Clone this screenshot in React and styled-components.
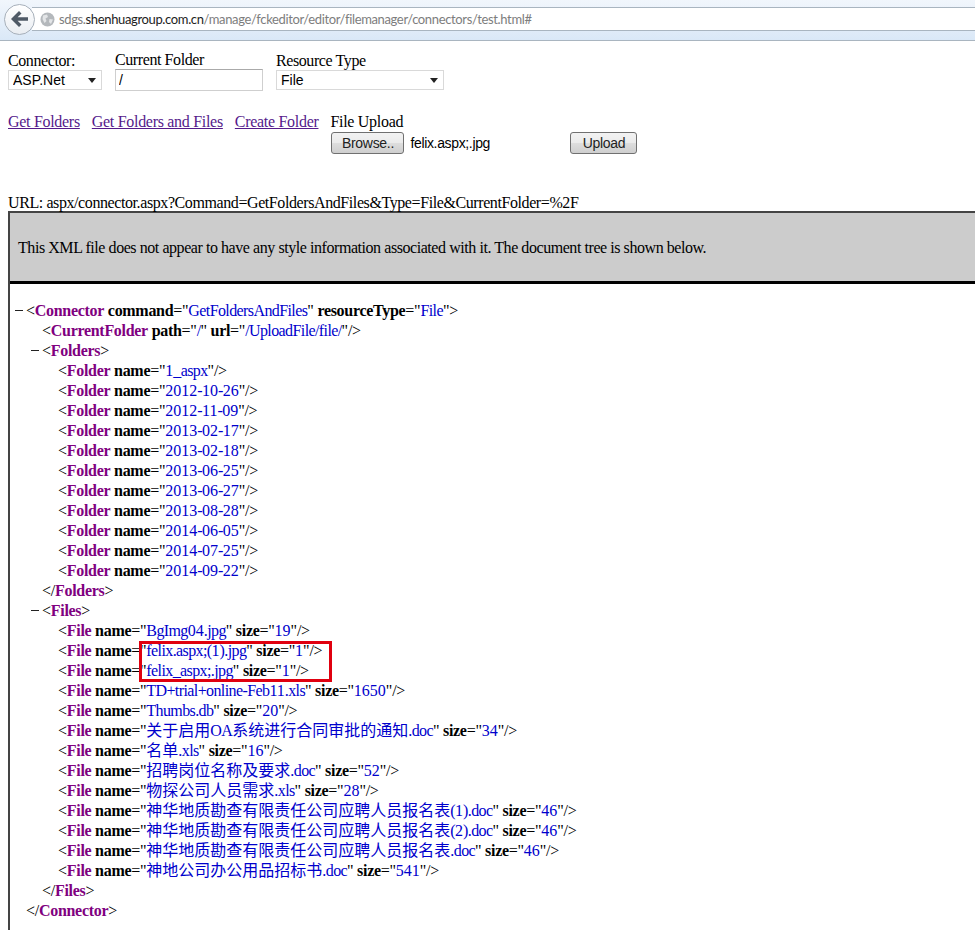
import styled, { createGlobalStyle } from "styled-components";

const GlobalStyle = createGlobalStyle`
  html, body {
    margin: 0;
    height: 930px;
    overflow: hidden;
    background: #fff;
  }
  body {
    font-family: "Liberation Serif", "Noto Sans CJK SC", serif;
    font-size: 16px;
    letter-spacing: -0.41px;
    color: #000;
  }
`;

const folders = [
  "1_aspx", "2012-10-26", "2012-11-09", "2013-02-17", "2013-02-18", "2013-06-25",
  "2013-06-27", "2013-08-28", "2014-06-05", "2014-07-25", "2014-09-22",
];

const files = [
  ["BgImg04.jpg", "19"],
  ["felix.aspx;(1).jpg", "1"],
  ["felix_aspx;.jpg", "1"],
  ["TD+trial+online-Feb11.xls", "1650"],
  ["Thumbs.db", "20"],
  ["关于启用OA系统进行合同审批的通知.doc", "34"],
  ["名单.xls", "16"],
  ["招聘岗位名称及要求.doc", "52"],
  ["物探公司人员需求.xls", "28"],
  ["神华地质勘查有限责任公司应聘人员报名表(1).doc", "46"],
  ["神华地质勘查有限责任公司应聘人员报名表(2).doc", "46"],
  ["神华地质勘查有限责任公司应聘人员报名表.doc", "46"],
  ["神地公司办公用品招标书.doc", "541"],
];

// chinese and digit runs keep their full width, only latin text is tightened
const splitRuns = (text) =>
  text.split(/([\u4e00-\u9fa5]+|\d+)/).map((part, i) => (i % 2 ? <FullWidth key={i}>{part}</FullWidth> : part));

const Attr = ({ name, value }) => (
  <>
    {" "}
    <AttrName>{name}</AttrName>="<AttrValue>{splitRuns(value)}</AttrValue>"
  </>
);

const App = () => {
  return (
    <>
      <GlobalStyle />
      <Toolbar>
        <BackButton>
          <svg width="20" height="18" viewBox="0 0 20 18">
            <path d="M9 1 L1 9 L9 17 L11.5 14.5 L7.6 10.8 H18 V7.2 H7.6 L11.5 3.5 Z" fill="#4f5a66" />
          </svg>
        </BackButton>
        <AddressBar>
          <svg width="15" height="15" viewBox="0 0 15 15">
            <circle cx="7.5" cy="7.5" r="7" fill="#b4b8bc" />
            <path d="M3 3.5 L7 2.5 L8 5 L5.5 6.5 L6.5 9 L4.5 11 L2.5 7 Z M9.5 7 L13 7.5 L11 12 L9 10 Z" fill="#e3e5e7" />
          </svg>
          <AddressText>
            sdgs.<Domain>shenhuagroup.com.cn</Domain>/manage/fckeditor/editor/filemanager/connectors/test.html#
          </AddressText>
        </AddressBar>
      </Toolbar>

      <Page>
        <FormRow>
          <Field $width="94px" $right="13px">
            <FieldLabel>Connector:</FieldLabel>
            <SelectBox>
              <Select defaultValue="ASP.Net">
                <option>ASP.Net</option>
              </Select>
            </SelectBox>
          </Field>
          <Field $width="148px" $right="13px" $raised>
            <FieldLabel>Current Folder</FieldLabel>
            <TextInput defaultValue="/" />
          </Field>
          <Field $width="168px">
            <FieldLabel>Resource Type</FieldLabel>
            <SelectBox>
              <Select defaultValue="File">
                <option>File</option>
              </Select>
            </SelectBox>
          </Field>
        </FormRow>

        <ActionRow>
          <LinkItem href="#">Get Folders</LinkItem>
          <LinkItem href="#">Get Folders and Files</LinkItem>
          <LinkItem href="#">Create Folder</LinkItem>
          <UploadBlock>
            <div>File Upload</div>
            <UploadControls>
              <PushButton $width="73px">Browse..</PushButton>
              <FileName>felix.aspx;.jpg</FileName>
              <PushButton $width="67px">Upload</PushButton>
            </UploadControls>
          </UploadBlock>
        </ActionRow>

        <UrlLine>URL: aspx/connector.aspx?Command=GetFoldersAndFiles&amp;Type=File&amp;CurrentFolder=%2F</UrlLine>

        <Frame>
          <Notice>This XML file does not appear to have any style information associated with it. The document tree is shown below.</Notice>
          <Tree>
            <Line $level={0}>
              <Fold />&lt;<Tag>Connector</Tag>
              <Attr name="command" value="GetFoldersAndFiles" />
              <Attr name="resourceType" value="File" />&gt;
            </Line>
            <Line $level={1}>
              &lt;<Tag>CurrentFolder</Tag>
              <Attr name="path" value="/" />
              <Attr name="url" value="/UploadFile/file/" />/&gt;
            </Line>
            <Line $level={1}>
              <Fold />&lt;<Tag>Folders</Tag>&gt;
            </Line>
            {folders.map((f) => (
              <Line $level={2} key={f}>
                &lt;<Tag>Folder</Tag>
                <Attr name="name" value={f} />/&gt;
              </Line>
            ))}
            <Line $level={1}>
              &lt;/<Tag>Folders</Tag>&gt;
            </Line>
            <Line $level={1}>
              <Fold />&lt;<Tag>Files</Tag>&gt;
            </Line>
            {files.map(([name, size]) => (
              <Line $level={2} key={name}>
                &lt;<Tag>File</Tag>
                <Attr name="name" value={name} />
                <Attr name="size" value={size} />/&gt;
              </Line>
            ))}
            <Line $level={1}>
              &lt;/<Tag>Files</Tag>&gt;
            </Line>
            <Line $level={0}>
              &lt;/<Tag>Connector</Tag>&gt;
            </Line>
            <Highlight />
          </Tree>
        </Frame>
      </Page>
    </>
  );
};

const Toolbar = styled.div`
  height: 41px;
  box-sizing: border-box;
  display: flex;
  align-items: center;
  padding: 0 0 2px 4px;
  background: linear-gradient(#f1f6fc, #dae8f7);
  border-bottom: 1px solid #a9b5c0;
`;

const BackButton = styled.div`
  width: 31px;
  height: 31px;
  box-sizing: border-box;
  flex: none;
  display: flex;
  align-items: center;
  justify-content: center;
  border-radius: 50%;
  border: 1px solid #a7b0ba;
  background: linear-gradient(#fff, #e9edf2);
  position: relative;
  z-index: 1;
`;

const AddressBar = styled.div`
  flex: 1;
  height: 24px;
  box-sizing: border-box;
  margin-left: -3px;
  padding-left: 8px;
  display: flex;
  align-items: center;
  gap: 4px;
  background: #fff;
  border-top: 1px solid #a9b5c0;
  border-bottom: 1px solid #a9b5c0;
`;

const AddressText = styled.span`
  font-family: "Lato", "Liberation Sans", sans-serif;
  font-size: 13px;
  letter-spacing: -0.36px;
  color: #7d7d7d;
  white-space: nowrap;
`;

const Domain = styled.span`
  color: #222;
`;

const Page = styled.div`
  padding-left: 8px;
`;

const FormRow = styled.div`
  display: flex;
  padding-top: 11px;
`;

const Field = styled.div`
  width: ${(p) => p.$width};
  margin-right: ${(p) => p.$right || 0};
  margin-top: ${(p) => (p.$raised ? "-1px" : 0)};
  display: flex;
  flex-direction: column;
`;

const FieldLabel = styled.label`
  height: 18px;
  line-height: 18px;
`;

const SelectBox = styled.div`
  position: relative;
  height: 20px;
  &::after {
    content: "";
    position: absolute;
    right: 6px;
    top: 8px;
    border-left: 4px solid transparent;
    border-right: 4px solid transparent;
    border-top: 5px solid #222;
    pointer-events: none;
  }
`;

const Select = styled.select`
  appearance: none;
  width: 100%;
  height: 100%;
  box-sizing: border-box;
  margin: 0;
  padding: 0 0 0 4px;
  background: #fff;
  border: 1px solid #d9d9d9;
  border-radius: 0;
  font-family: "Liberation Sans", sans-serif;
  font-size: 14px;
  color: #000;
`;

const TextInput = styled.input`
  width: 100%;
  height: 22px;
  box-sizing: border-box;
  margin: 0;
  padding: 0 3px;
  border: 1px solid #cfcfcf;
  border-top-color: #aaa;
  font-family: "Liberation Sans", sans-serif;
  font-size: 14px;
`;

const ActionRow = styled.div`
  display: flex;
  gap: 12px;
  align-items: flex-start;
  padding-top: 22px;
  line-height: 18px;
  letter-spacing: -0.3px;
`;

const LinkItem = styled.a`
  color: #551a8b;
`;

const UploadBlock = styled.div`
  display: flex;
  flex-direction: column;
`;

const UploadControls = styled.div`
  display: flex;
  align-items: center;
  margin-left: 1px;
  margin-top: 1px;
`;

const PushButton = styled.button`
  width: ${(p) => p.$width};
  height: 22px;
  flex: none;
  padding: 0;
  border: 1px solid #707070;
  border-radius: 3px;
  background: linear-gradient(#f2f2f2 0%, #ebebeb 48%, #dddddd 52%, #cfcfcf 100%);
  font-family: "Liberation Sans", sans-serif;
  font-size: 14px;
  letter-spacing: -0.3px;
  color: #222;
`;

const FileName = styled.span`
  width: 166px;
  padding-left: 6px;
  box-sizing: border-box;
  font-family: "Liberation Sans", sans-serif;
  font-size: 14px;
  letter-spacing: -0.35px;
`;

const UrlLine = styled.div`
  margin-top: 40px;
  height: 17px;
  line-height: 17px;
  white-space: nowrap;
`;

const Frame = styled.div`
  height: 760px;
  border-top: 2px solid #444;
  border-left: 2px solid #444;
`;

const Notice = styled.div`
  height: 66px;
  display: flex;
  align-items: center;
  padding: 2px 0 0 8px;
  background: #cccccc;
  border-bottom: 3px solid #000;
  letter-spacing: -0.44px;
  white-space: nowrap;
`;

const Tree = styled.div`
  position: relative;
  padding-top: 17px;
`;

const Line = styled.div`
  position: relative;
  height: 20px;
  line-height: 20px;
  padding-left: ${(p) => 16 + p.$level * 16}px;
  letter-spacing: -0.25px;
  white-space: nowrap;
`;

const Fold = styled.span`
  display: inline-block;
  width: 8px;
  height: 1px;
  margin-left: -11px;
  margin-right: 3px;
  vertical-align: 5px;
  background: #222;
`;

const Tag = styled.span`
  color: #800080;
  font-weight: bold;
  letter-spacing: -0.3px;
`;

const AttrName = styled.span`
  font-weight: bold;
  letter-spacing: -0.3px;
`;

const AttrValue = styled.span`
  color: #0000cc;
  letter-spacing: -0.6px;
`;

const FullWidth = styled.span`
  letter-spacing: 0;
`;

const Highlight = styled.div`
  position: absolute;
  left: 129px;
  top: 357px;
  width: 187px;
  height: 35px;
  border: 3px solid #e0000f;
`;

export default App;
